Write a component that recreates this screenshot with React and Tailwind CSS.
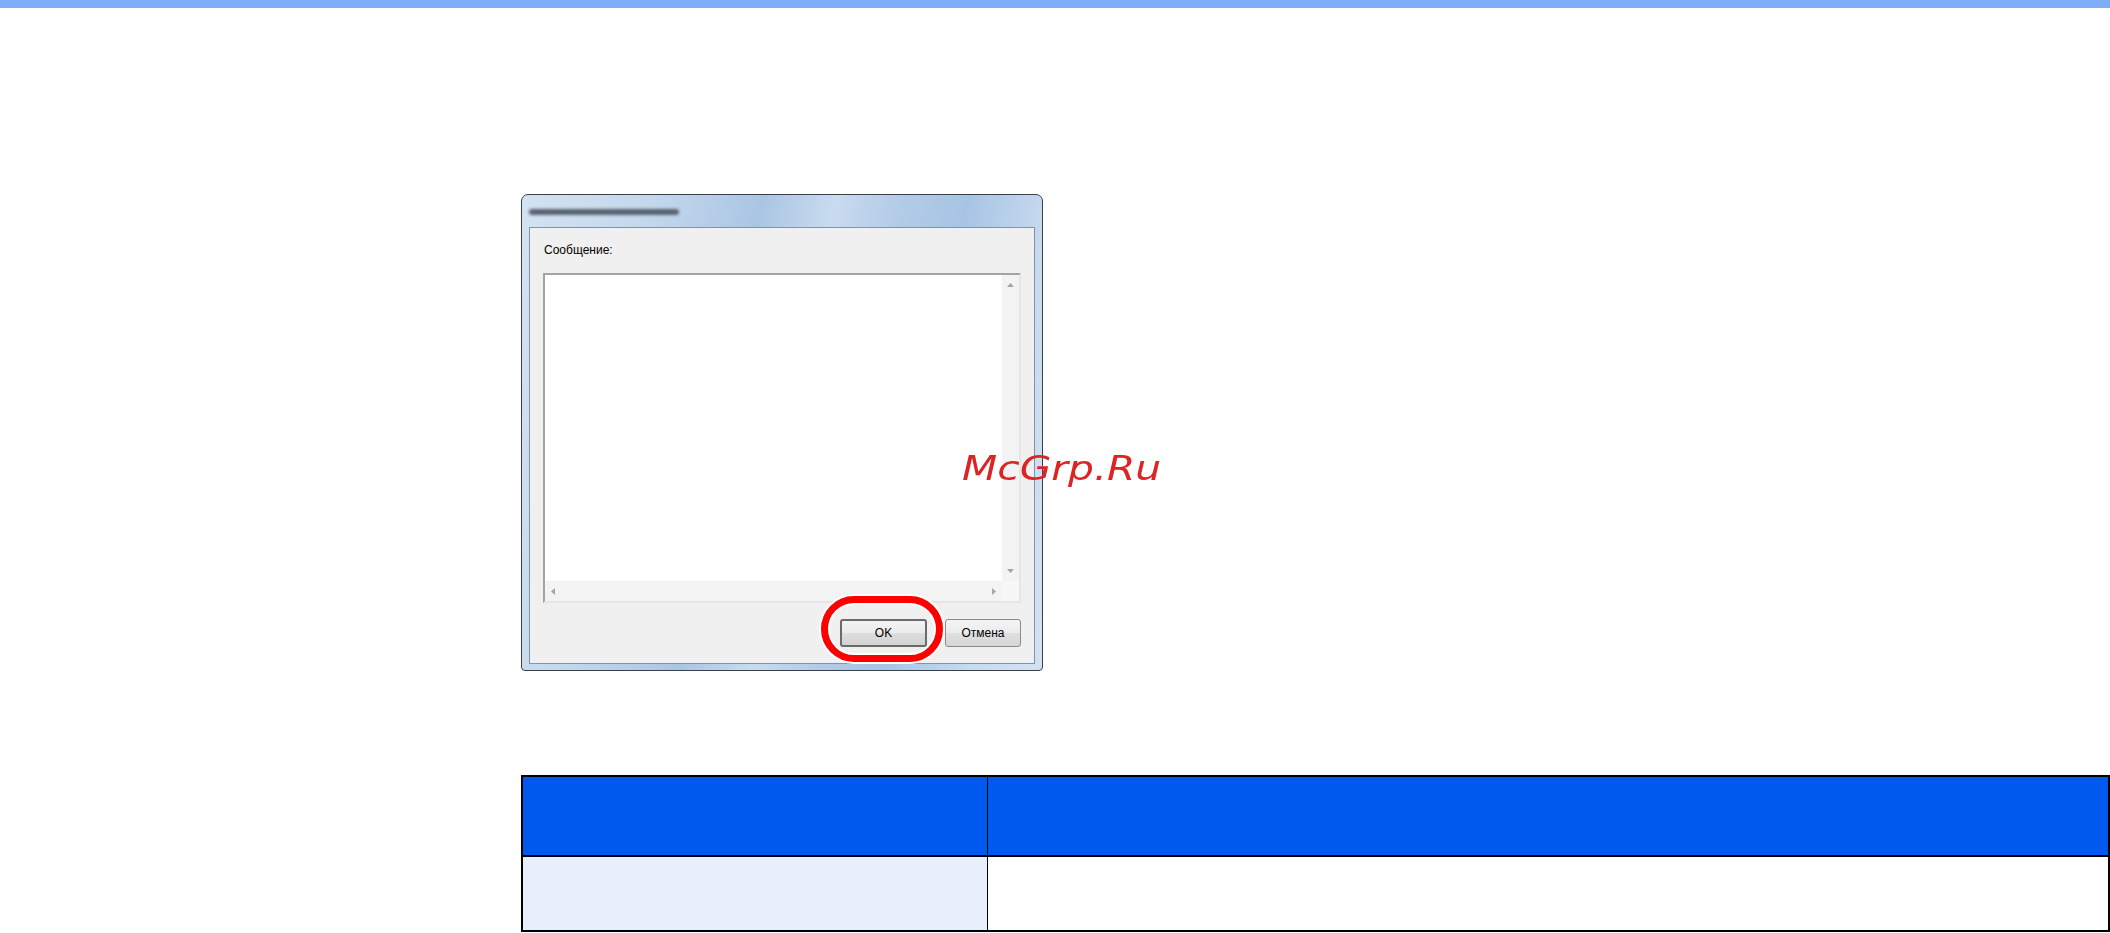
const ArrowUp = () => (
  <svg width="7" height="4" viewBox="0 0 7 4"><polygon points="0,4 3.5,0 7,4" fill="#a6a6a6" /></svg>
);
const ArrowDown = () => (
  <svg width="7" height="4" viewBox="0 0 7 4"><polygon points="0,0 3.5,4 7,0" fill="#a6a6a6" /></svg>
);
const ArrowLeft = () => (
  <svg width="4" height="7" viewBox="0 0 4 7"><polygon points="4,0 0,3.5 4,7" fill="#a6a6a6" /></svg>
);
const ArrowRight = () => (
  <svg width="4" height="7" viewBox="0 0 4 7"><polygon points="0,0 4,3.5 0,7" fill="#a6a6a6" /></svg>
);

const MessageBox = () => (
  <div className="h-[330px] flex flex-col border-2 border-t-[#a3a3a3] border-l-[#a3a3a3] border-r-[#e6e6e6] border-b-[#e6e6e6] bg-white">
    <div className="flex-1 flex">
      <div className="flex-1 bg-white" />
      {/* vertical scrollbar */}
      <div className="w-[17px] bg-[#f3f3f3] flex flex-col items-center justify-between py-[8px]">
        <ArrowUp />
        <ArrowDown />
      </div>
    </div>
    <div className="h-[20px] flex">
      <div className="flex-1 bg-[#f3f3f3] flex items-center justify-between px-[6px]">
        <ArrowLeft />
        <ArrowRight />
      </div>
      <div className="w-[17px] bg-[#f7f7f7]" />
    </div>
  </div>
);

const Dialog = () => (
  <div className="w-[522px] h-[477px] flex flex-col rounded-t-[7px] rounded-b-[4px] border border-[#3b4047] px-[7px] pb-[6px] bg-[linear-gradient(100deg,#d4e2f1_0%,#c3d7ec_22%,#aac5e4_40%,#c9dbef_52%,#b2cbe7_63%,#a8c4e4_74%,#c8dbef_88%,#d3e2f2_100%)]">
    {/* title bar with blurred caption */}
    <div className="h-[32px] flex items-center">
      <div className="w-[150px] h-[6px] mt-[2px] bg-[#58626e] blur-[1.5px] rounded-full" />
    </div>
    <div className="flex-1 flex flex-col border border-[#8193a8] bg-[#f0f0f0] px-[13px] pt-[15px] pb-[15px] font-['Liberation_Sans',Arial,sans-serif] text-[12px] text-black">
      <div className="h-[15px] leading-[15px] pl-[1px]">Сообщение:</div>
      <div className="mt-[15px]">
        <MessageBox />
      </div>
      <div className="mt-[16px] flex justify-end gap-[18px]">
        <button className="w-[87px] h-[28px] rounded-[3px] border-2 border-[#6b6b6b] bg-[linear-gradient(#f3f3f3_0%,#ebebeb_48%,#dddddd_52%,#d2d2d2_100%)] text-[12px]">
          OK
        </button>
        <button className="w-[76px] h-[28px] rounded-[3px] border border-[#8a8a8a] bg-[linear-gradient(#f4f4f4_0%,#ececec_48%,#dfdfdf_52%,#d6d6d6_100%)] text-[12px]">
          Отмена
        </button>
      </div>
    </div>
  </div>
);

export default function App() {
  return (
    <div className="relative min-h-[933px] bg-white overflow-hidden">
      <div className="h-[8px] bg-[#80adf8]" />

      <div className="relative ml-[521px] mt-[186px] w-[522px]">
        <Dialog />
        {/* red highlight around the OK button */}
        <div className="absolute left-[300px] top-[402px] w-[122px] h-[66px] rounded-full border-[7px] border-[#ff0000] shadow-[0_0_0_2px_#ffffff,inset_0_0_0_2px_#ffffff]" />
      </div>

      {/* watermark */}
      <div className="absolute left-[962px] top-[451px] origin-left scale-x-120 font-['DejaVu_Sans',Verdana,sans-serif] italic text-[34px] leading-[34px] text-[#dc2424]">
        McGrp.Ru
      </div>

      <div className="ml-[521px] mt-[104px] w-[1589px] border-2 border-black">
        <div className="flex h-[80px] bg-[#0059ef] border-b-2 border-black">
          <div className="w-[465px] border-r border-black" />
          <div className="flex-1" />
        </div>
        <div className="flex h-[73px]">
          <div className="w-[465px] bg-[#e7eefc] border-r border-black" />
          <div className="flex-1 bg-white" />
        </div>
      </div>
    </div>
  );
}
